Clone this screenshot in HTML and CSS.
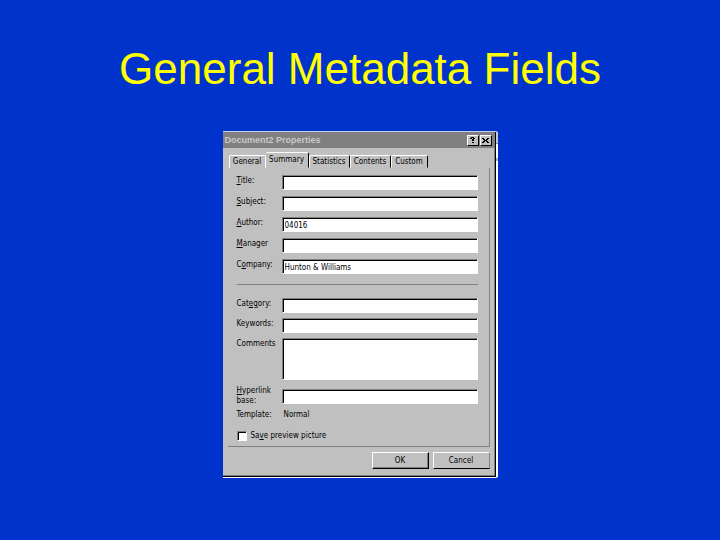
FILE: index.html
```html
<!DOCTYPE html>
<html lang="en">
<head>
    <meta charset="UTF-8">
    <meta name="viewport" content="width=device-width, initial-scale=1.0">
    <title>General Metadata Fields</title>
    <link rel="stylesheet" href="styles.css">
</head>
<body>
    <main class="slide">
        <h1 class="slide-title">General Metadata Fields</h1>

        <form class="dialog">
            <div class="title-bar">
                <h2 class="title-text">Document2 Properties</h2>
                <button type="button" class="caption-button" aria-label="Help">
                    <svg viewBox="0 0 9 8" shape-rendering="crispEdges"><path d="M3 1h3v1h-3zM2 2h2v1h-2zM5 2h2v1h-2zM4 3h2v2h-2zM4 6h2v1h-2z"/></svg>
                </button>
                <button type="button" class="caption-button" aria-label="Close">
                    <svg viewBox="0 0 9 8" shape-rendering="crispEdges"><path d="M1 2h2v1h-2zM6 2h2v1h-2zM2 3h2v1h-2zM5 3h2v1h-2zM3 4h3v1h-3zM2 5h2v1h-2zM5 5h2v1h-2zM1 6h2v1h-2zM6 6h2v1h-2z"/></svg>
                </button>
            </div>

            <div class="tabs" role="tablist">
                <button type="button" class="tab tab-first" role="tab">General</button>
                <button type="button" class="tab tab-active" role="tab" aria-selected="true">Summary</button>
                <button type="button" class="tab tab-wide" role="tab">Statistics</button>
                <button type="button" class="tab tab-wide" role="tab">Contents</button>
                <button type="button" class="tab" role="tab">Custom</button>
            </div>

            <div class="panel">
                <div class="fields">
                    <div class="row">
                        <label for="title"><u>T</u>itle:</label>
                        <input type="text" id="title" class="field">
                    </div>
                    <div class="row">
                        <label for="subject"><u>S</u>ubject:</label>
                        <input type="text" id="subject" class="field">
                    </div>
                    <div class="row">
                        <label for="author"><u>A</u>uthor:</label>
                        <input type="text" id="author" class="field" value="04016">
                    </div>
                    <div class="row">
                        <label for="manager"><u>M</u>anager</label>
                        <input type="text" id="manager" class="field">
                    </div>
                    <div class="row">
                        <label for="company">C<u>o</u>mpany:</label>
                        <input type="text" id="company" class="field" value="Hunton &amp; Williams">
                    </div>
                </div>

                <hr class="divider">

                <div class="fields fields-tight">
                    <div class="row">
                        <label for="category">Cat<u>eg</u>ory:</label>
                        <input type="text" id="category" class="field">
                    </div>
                    <div class="row">
                        <label for="keywords">Keywords:</label>
                        <input type="text" id="keywords" class="field">
                    </div>
                    <div class="row">
                        <label for="comments">Comments</label>
                        <textarea id="comments" class="field field-tall"></textarea>
                    </div>
                </div>

                <div class="row row-base">
                    <label for="base"><u>H</u>yperlink<br>base:</label>
                    <input type="text" id="base" class="field">
                </div>
                <div class="row row-template">
                    <span>Template:</span>
                    <span class="template-name">Normal</span>
                </div>
                <div class="check-row">
                    <input type="checkbox" id="preview" class="check">
                    <label for="preview">Sa<u>v</u>e preview picture</label>
                </div>
            </div>

            <div class="actions">
                <button type="button" class="button button-default">OK</button>
                <button type="button" class="button">Cancel</button>
            </div>
        </form>
    </main>
</body>
</html>
```

FILE: styles.css
```css
* {
    box-sizing: border-box;
}

body {
    margin: 0;
    min-height: 100vh;
    background: #0033cc;
    color: #000;
    font-family: "DejaVu Sans Condensed", "Liberation Sans", sans-serif;
    font-size: 8px;
    line-height: 10px;
}

.slide {
    display: flex;
    flex-direction: column;
    align-items: center;
    padding: 44px 16px;
}

.slide-title {
    margin: 0 0 37px;
    color: #ffff00;
    font-family: "Liberation Sans", Arial, sans-serif;
    font-size: 44px;
    font-weight: normal;
    line-height: 50px;
    text-align: center;
}

button,
input,
textarea {
    margin: 0;
    padding: 0;
    border-radius: 0;
    color: inherit;
    font: inherit;
}

/* Dialog window, with a sliver of the window behind it on the right */
.dialog {
    width: 100%;
    max-width: 275px;
    background:
        linear-gradient(#c0c0c0, #c0c0c0) padding-box,
        linear-gradient(#c0c8d8 12px, #8090b0 12px 13px, #fff 13px 27px, #b0b8d0 27px 30px, #fff 30px) border-box;
    border-top: 1px solid #c0d0f0;
    border-right: 2px solid transparent;
    border-bottom: 1px solid #fff;
    box-shadow: inset -1px -1px #000, inset -2px -2px #808080;
}

.title-bar {
    display: flex;
    align-items: center;
    gap: 1px;
    height: 16px;
    margin-right: 2px;
    padding: 0 2px;
    background: #808080;
}

.title-text {
    flex: 1;
    margin: 0;
    color: #c8c8c8;
    font-family: "Liberation Sans", Arial, sans-serif;
    font-size: 9px;
    font-weight: bold;
}

.caption-button {
    display: flex;
    align-items: center;
    justify-content: center;
    width: 12px;
    height: 11px;
    background: #c0c0c0;
    border: 1px solid;
    border-color: #fff #000 #000 #fff;
}

.caption-button svg {
    flex: none;
    width: 9px;
    height: 8px;
}

/* Tabs */
.tabs {
    display: flex;
    align-items: flex-end;
    height: 20px;
    margin: 0 6px;
}

.tab {
    width: 37px;
    height: 13px;
    background: #c0c0c0;
    border: 1px solid;
    border-color: #fff #000 transparent #fff;
    border-radius: 2px 2px 0 0;
    white-space: nowrap;
}

.tab-first {
    border-right-color: #fff;
}

.tab-active {
    width: 43px;
    height: 16px;
    border-left: 0;
}

.tab-wide {
    width: 41px;
}

/* Summary page */
.panel {
    margin: 0 6px 0 5px;
    padding: 7px 11px 5px 9px;
    border-right: 1px solid #808080;
    border-bottom: 1px solid #808080;
}

.fields {
    display: flex;
    flex-direction: column;
    gap: 6px;
}

.fields-tight {
    gap: 5px;
}

.row {
    display: grid;
    grid-template-columns: 45px 1fr;
    align-items: start;
    line-height: 12px;
}

.field {
    width: 100%;
    height: 15px;
    padding: 1px 2px 0;
    background: #fff;
    border: 1px solid;
    border-color: #808080 #fff #fff #808080;
    box-shadow: inset 1px 1px #000;
    outline: 0;
}

.field-tall {
    display: block;
    height: 42px;
    resize: none;
}

.divider {
    height: 1px;
    margin: 10px 0 13px;
    background: #808080;
    border: 0;
}

.row-base {
    align-items: center;
    margin-top: 6px;
    line-height: 10px;
}

.row-template {
    margin-top: 3px;
}

.template-name {
    padding-left: 2px;
}

.check-row {
    display: flex;
    align-items: center;
    gap: 4px;
    margin-top: 10px;
}

.check {
    width: 10px;
    height: 10px;
    appearance: none;
    background: #fff;
    border: 1px solid;
    border-color: #808080 #fff #fff #808080;
    box-shadow: inset 1px 1px #000;
}

/* Dialog buttons */
.actions {
    display: flex;
    justify-content: flex-end;
    gap: 4px;
    padding: 5px 6px 8px;
}

.button {
    width: 57px;
    height: 17px;
    background: #c0c0c0;
    border: 1px solid;
    border-color: #fff #808080 #000 #fff;
}

.button-default {
    border-right-color: #000;
    box-shadow: inset -1px -1px #808080;
}
```
